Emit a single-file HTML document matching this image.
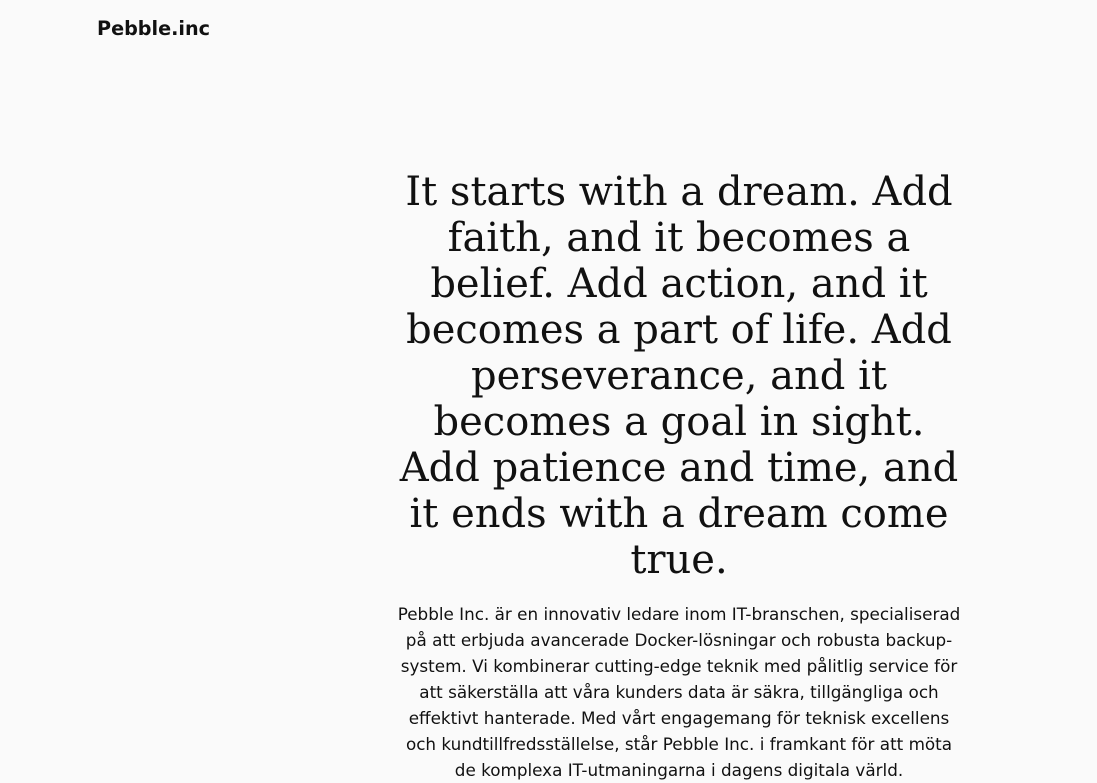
<!DOCTYPE html>
<html><head><meta charset="utf-8"><style>
html,body{margin:0;padding:0;background:#fafafa;width:1097px;height:782px;overflow:hidden}
.logo{position:absolute;left:97px;top:17px;font:bold 19.2px "DejaVu Sans",sans-serif;color:#111}
.c{position:absolute;left:394px;width:570px;top:169px;text-align:center;color:#111}
h1{margin:0;font:normal 40px/46px "DejaVu Serif",serif}
p{margin:18px 0 0;font:16.8px/26px "DejaVu Sans",sans-serif}
</style></head><body>
<div class="logo">Pebble.inc</div>
<div class="c">
<h1>It starts with a dream. Add faith, and it becomes a belief. Add action, and it becomes a part of life. Add perseverance, and it becomes a goal in sight. Add patience and time, and it ends with a dream come true.</h1>
<p>Pebble Inc. är en innovativ ledare inom IT-branschen, specialiserad på att erbjuda avancerade Docker-lösningar och robusta backup-system. Vi kombinerar cutting-edge teknik med pålitlig service för att säkerställa att våra kunders data är säkra, tillgängliga och effektivt hanterade. Med vårt engagemang för teknisk excellens och kundtillfredsställelse, står Pebble Inc. i framkant för att möta de komplexa IT-utmaningarna i dagens digitala värld.</p>
</div>
</body></html>
